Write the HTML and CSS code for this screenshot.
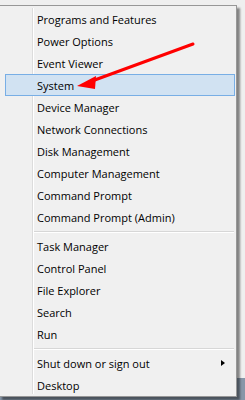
FILE: index.html
```html
<!DOCTYPE html>
<html lang="en">
<head>
  <meta charset="UTF-8" />
  <title>Quick Link Menu</title>
  <link rel="stylesheet" href="styles.css">
</head>
<body>
  <div class="menu">
    <ul class="menu-group">
      <li class="menu-item">Programs and Features</li>
      <li class="menu-item">Power Options</li>
      <li class="menu-item">Event Viewer</li>
      <li class="menu-item active">System</li>
      <li class="menu-item">Device Manager</li>
      <li class="menu-item">Network Connections</li>
      <li class="menu-item">Disk Management</li>
      <li class="menu-item">Computer Management</li>
      <li class="menu-item">Command Prompt</li>
      <li class="menu-item">Command Prompt (Admin)</li>
    </ul>
    <div class="separator"></div>
    <ul class="menu-group">
      <li class="menu-item">Task Manager</li>
      <li class="menu-item">Control Panel</li>
      <li class="menu-item">File Explorer</li>
      <li class="menu-item">Search</li>
      <li class="menu-item">Run</li>
    </ul>
    <div class="separator"></div>
    <ul class="menu-group">
      <li class="menu-item has-sub">Shut down or sign out</li>
      <li class="menu-item">Desktop</li>
    </ul>
  </div>

  <!-- red annotation arrow drawn over the menu -->
  <svg class="annotation" width="245" height="400" viewBox="0 0 245 400">
    <line x1="193" y1="44" x2="92" y2="81" stroke="#ff0000" stroke-width="3" stroke-linecap="round"/>
    <polygon points="77,86 96,76 95,89" fill="#ff0000"/>
  </svg>
</body>
</html>
```

FILE: styles.css
```css
:root {
  --menu-bg: #f0f0f0;
  --menu-border: #979797;
  --hover-bg: #d1e2f2;
  --hover-border: #78aee5;
  --text: #000;
}

body {
  margin: 0;
  height: 400px;
  overflow: hidden;
  background: linear-gradient(to bottom, #efefef 0, #efefef 378px, #8796a8 378px);
  font-family: 'Open Sans', 'Noto Sans', sans-serif;
  font-size: 11px;
  color: var(--text);
}

.menu {
  position: relative;
  width: 236px;
  margin: 5px 0 0 -1px;
  padding: 2px 0 0;
  background: var(--menu-bg);
  border: 1px solid var(--menu-border);
  box-shadow: 3px 3px 2px rgba(0, 0, 0, 0.45);
}

/* icon column divider */
.menu::before {
  content: "";
  position: absolute;
  top: 2px;
  bottom: 2px;
  left: 32px;
  width: 1px;
  background: #dcdcdc;
  border-right: 1px solid #fff;
}

.menu-group {
  list-style: none;
  margin: 0;
  padding: 0;
}

.menu-item {
  position: relative;
  height: 22px;
  line-height: 21px;
  margin: 0 1px 0 5px;
  padding-left: 31px;
  border: 1px solid transparent;
  box-sizing: border-box;
  white-space: nowrap;
}

.menu-item.active {
  background: var(--hover-bg);
  border-color: var(--hover-border);
}

.menu-item.has-sub::after {
  content: "";
  position: absolute;
  right: 9px;
  top: 7px;
  border-left: 4px solid #000;
  border-top: 3.5px solid transparent;
  border-bottom: 3.5px solid transparent;
}

.separator {
  height: 1px;
  margin: 3px 2px 2px 33px;
  background: #d7d7d7;
  border-bottom: 1px solid #fff;
}

.annotation {
  position: absolute;
  top: 0;
  left: 0;
}
```
